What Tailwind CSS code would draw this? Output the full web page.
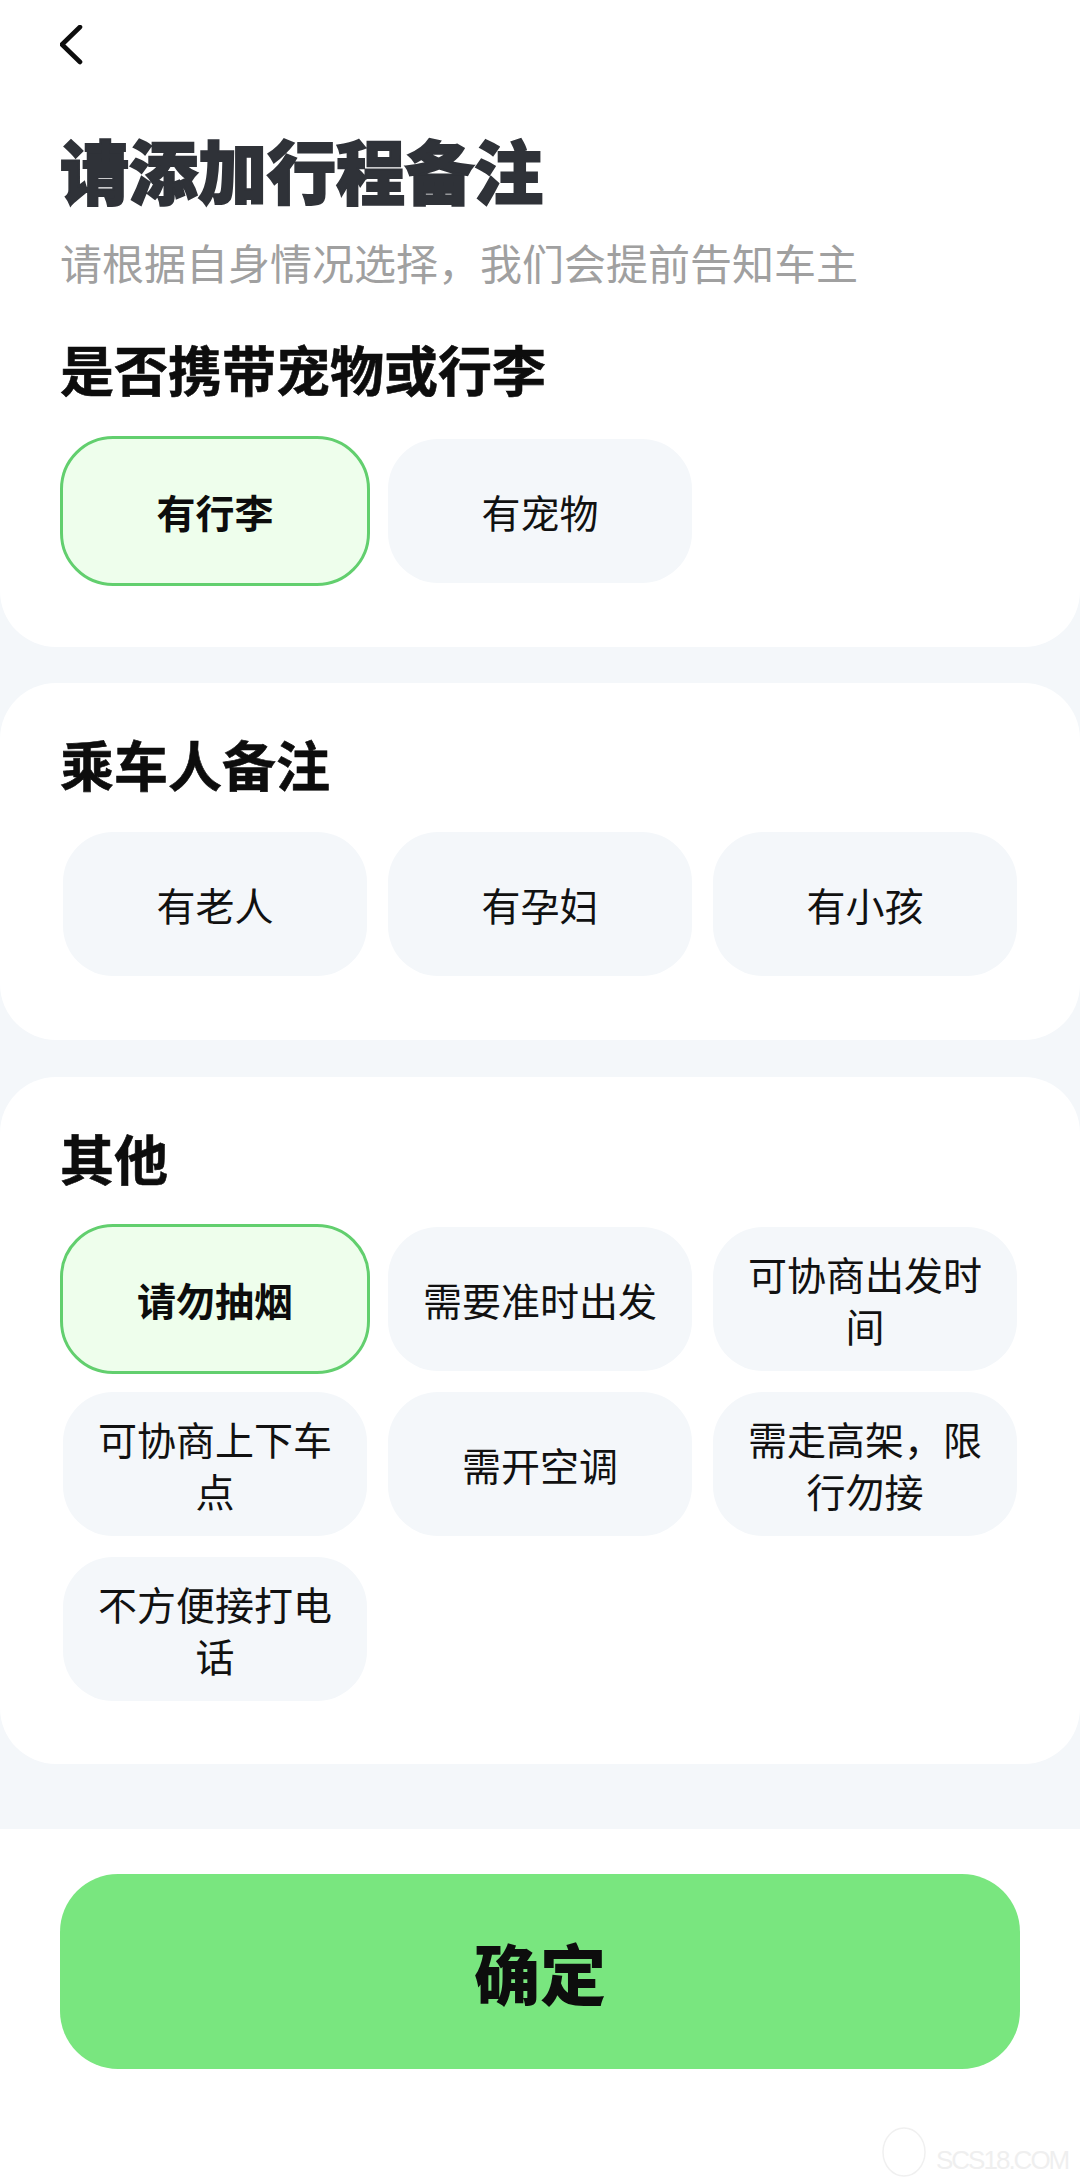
<!DOCTYPE html>
<html lang="zh-CN">
<head>
    <meta charset="UTF-8">
    <meta name="viewport" content="width=device-width, initial-scale=1.0">
    <title>请添加行程备注</title>
    <script src="https://cdn.jsdelivr.net/npm/@tailwindcss/browser@4"></script>
</head>
<body class="bg-[#f4f7fa] font-['Noto_Sans_CJK_SC','Noto_Sans',sans-serif]">
    <div class="relative w-[1080px] h-[2183px] overflow-hidden flex flex-col">
        <section class="bg-white rounded-b-[56px] px-[60px] pt-[25px] pb-[64px]">
            <svg class="w-[24px] h-[40px] block" viewBox="0 0 24 40" fill="none" stroke="#0d0d0d" stroke-width="4.6" stroke-linecap="round" stroke-linejoin="round">
                <path d="M20 2 2 19.500 20 37"/>
            </svg>
            <h1 class="mt-[64px] text-[69px] leading-[80px] font-black text-[#2f3238] [-webkit-text-stroke:2px_#2f3238]">请添加行程备注</h1>
            <p class="mt-[25px] text-[42px] leading-[56px] text-[#a0a0a0]">请根据自身情况选择，我们会提前告知车主</p>
            <h2 class="mt-[44px] text-[54px] leading-[70px] font-bold text-[#0d0d0d] [-webkit-text-stroke:0.6px_#0d0d0d]">是否携带宠物或行李</h2>
            <div class="mt-[35px] ml-[3px] grid grid-cols-[repeat(3,304px)] gap-[21px]">
                <div class="h-[144px] rounded-[50px] bg-[#eefeec] outline-[3px] outline-solid outline-[#62cf6e] flex items-center justify-center px-[24px] text-center text-[39px] leading-[52px] font-bold text-[#0d0d0d]">有行李</div>
                <div class="h-[144px] rounded-[50px] bg-[#f4f7fa] flex items-center justify-center px-[24px] text-center text-[39px] leading-[52px] text-[#111]">有宠物</div>
            </div>
        </section>

        <section class="mt-[36px] bg-white rounded-[56px] px-[60px] pt-[46px] pb-[64px]">
            <h2 class="text-[54px] leading-[70px] font-bold text-[#0d0d0d] [-webkit-text-stroke:0.6px_#0d0d0d]">乘车人备注</h2>
            <div class="mt-[33px] ml-[3px] grid grid-cols-[repeat(3,304px)] gap-[21px]">
                <div class="h-[144px] rounded-[50px] bg-[#f4f7fa] flex items-center justify-center px-[24px] text-center text-[39px] leading-[52px] text-[#111]">有老人</div>
                <div class="h-[144px] rounded-[50px] bg-[#f4f7fa] flex items-center justify-center px-[24px] text-center text-[39px] leading-[52px] text-[#111]">有孕妇</div>
                <div class="h-[144px] rounded-[50px] bg-[#f4f7fa] flex items-center justify-center px-[24px] text-center text-[39px] leading-[52px] text-[#111]">有小孩</div>
            </div>
        </section>

        <section class="mt-[37px] bg-white rounded-[56px] px-[60px] pt-[46px] pb-[63px]">
            <h2 class="text-[54px] leading-[70px] font-bold text-[#0d0d0d] [-webkit-text-stroke:0.6px_#0d0d0d]">其他</h2>
            <div class="mt-[34px] ml-[3px] grid grid-cols-[repeat(3,304px)] gap-[21px]">
                <div class="h-[144px] rounded-[50px] bg-[#eefeec] outline-[3px] outline-solid outline-[#62cf6e] flex items-center justify-center px-[24px] text-center text-[39px] leading-[52px] font-bold text-[#0d0d0d]">请勿抽烟</div>
                <div class="h-[144px] rounded-[50px] bg-[#f4f7fa] flex items-center justify-center px-[24px] text-center text-[39px] leading-[52px] text-[#111]">需要准时出发</div>
                <div class="h-[144px] rounded-[50px] bg-[#f4f7fa] flex items-center justify-center px-[24px] text-center text-[39px] leading-[52px] text-[#111]">可协商出发时间</div>
                <div class="h-[144px] rounded-[50px] bg-[#f4f7fa] flex items-center justify-center px-[24px] text-center text-[39px] leading-[52px] text-[#111]">可协商上下车点</div>
                <div class="h-[144px] rounded-[50px] bg-[#f4f7fa] flex items-center justify-center px-[24px] text-center text-[39px] leading-[52px] text-[#111]">需开空调</div>
                <div class="h-[144px] rounded-[50px] bg-[#f4f7fa] flex items-center justify-center px-[24px] text-center text-[39px] leading-[52px] text-[#111]">需走高架，限行勿接</div>
                <div class="h-[144px] rounded-[50px] bg-[#f4f7fa] flex items-center justify-center px-[24px] text-center text-[39px] leading-[52px] text-[#111]">不方便接打电话</div>
            </div>
        </section>

        <footer class="mt-[65px] flex-1 bg-white px-[60px] pt-[45px]">
            <button class="w-[960px] h-[195px] rounded-[58px] bg-[#79e67f] text-[66px] font-black text-[#0d0d0d]">确定</button>
        </footer>

        <!-- faint watermark -->
        <div class="absolute left-[882px] top-[2127px] flex items-end gap-[10px] text-[#efefef]">
            <svg class="w-[44px] h-[50px]" viewBox="0 0 44 50" fill="none" stroke="#f0f0f0" stroke-width="1.500"><ellipse cx="22" cy="25" rx="21" ry="24"/></svg>
            <span class="font-['Liberation_Sans',sans-serif] text-[26px] leading-[30px] tracking-[-2px] pb-[2px]">SCS18.COM</span>
        </div>
    </div>
</body>
</html>
